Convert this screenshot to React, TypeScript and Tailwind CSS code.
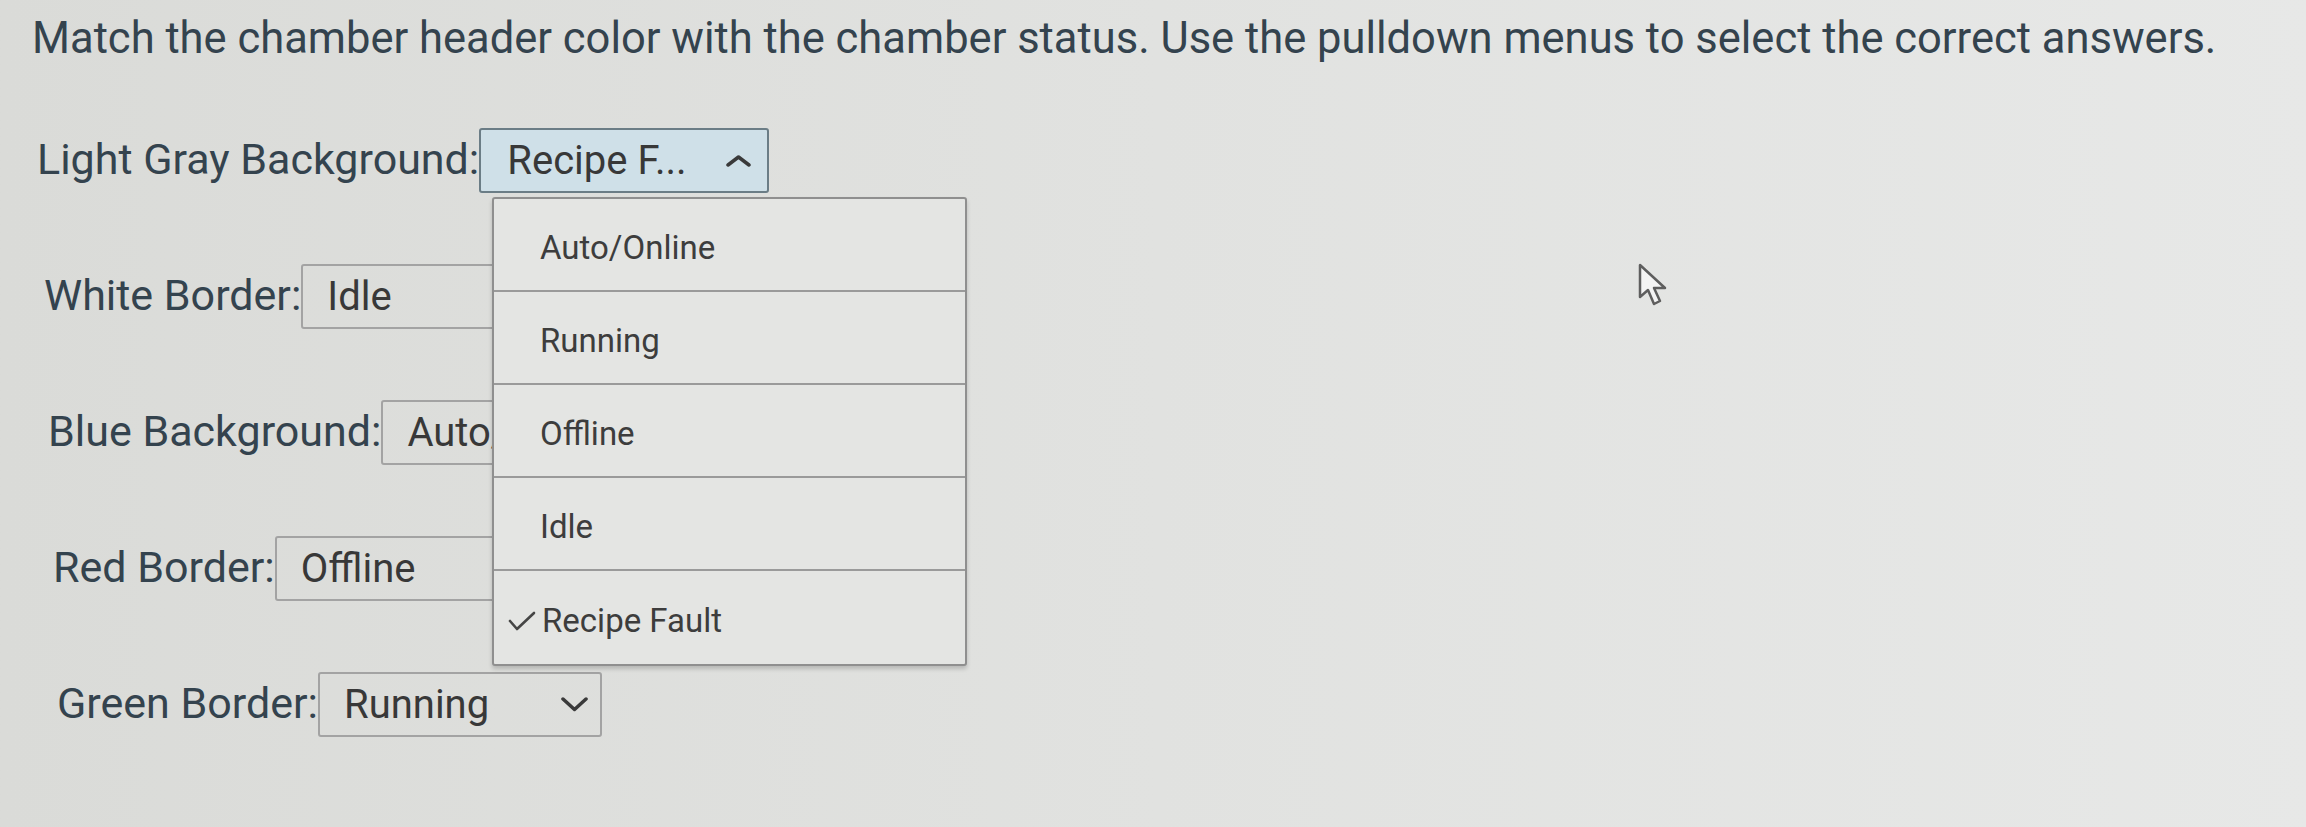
import React from "react";

const options = ["Auto/Online", "Running", "Offline", "Idle", "Recipe Fault"];

function ChevronDown() {
  return (
    <svg width="27" height="15" viewBox="0 0 27 15" fill="none">
      <polyline points="2,2 13.5,12.5 25,2" stroke="#3a3a3a" strokeWidth="3.5" strokeLinecap="round" strokeLinejoin="round" />
    </svg>
  );
}

function ChevronUp() {
  return (
    <svg width="25" height="12" viewBox="0 0 25 12" fill="none">
      <polyline points="2,10 12.5,2 23,10" stroke="#3a3a3a" strokeWidth="3.5" strokeLinecap="round" strokeLinejoin="round" />
    </svg>
  );
}

function Row({ label, value, indent, open }: { label: string; value: string; indent: string; open?: boolean }) {
  return (
    <div className={`flex items-baseline ${indent}`}>
      <span className="whitespace-nowrap text-[43px] leading-none text-[#34434e]">{label}</span>
      <div
        className={
          open
            ? "flex h-[65px] w-[290px] items-center justify-between rounded-[3px] border-2 border-[#6b7d86] bg-[#cfe0e8] pl-[26px] pr-[16px]"
            : "flex h-[65px] w-[284px] items-center justify-between overflow-hidden rounded-[3px] border-2 border-[#a3a3a3] pl-[24px] pr-[12px]"
        }
      >
        <span className="whitespace-nowrap text-[40px] leading-none text-[#383838]">{value}</span>
        {open ? <ChevronUp /> : <ChevronDown />}
      </div>
    </div>
  );
}

export default function App() {
  return (
    <div className="relative h-[827px] w-[2306px] overflow-hidden bg-linear-to-r from-[#dadbd8] via-[#e1e2e0] to-[#e7e8e7] font-['Roboto',sans-serif]">
      <h1 className="whitespace-nowrap pl-[32px] pt-[17px] text-[43.5px] font-normal leading-[44px] text-[#34434e]">
        Match the chamber header color with the chamber status. Use the pulldown menus to select the correct answers.
      </h1>

      <div className="mt-[67px] flex flex-col gap-[71px]">
        <Row label="Light Gray Background:" value="Recipe F..." indent="pl-[37px]" open />
        <Row label="White Border:" value="Idle" indent="pl-[44px]" />
        <Row label="Blue Background:" value="Auto/Online" indent="pl-[48px]" />
        <Row label="Red Border:" value="Offline" indent="pl-[53px]" />
        <Row label="Green Border:" value="Running" indent="pl-[57px]" />
      </div>

      {/* open dropdown menu */}
      <div className="absolute left-[492px] top-[197px] w-[475px] rounded-[3px] border-2 border-[#8f8f8f] bg-[#e4e5e3] shadow-[0_3px_4px_rgba(0,0,0,0.18)]">
        {options.map((o, i) => {
          const checked = o === "Recipe Fault";
          return (
            <div
              key={o}
              className={`flex h-[93px] items-center pt-[6px] text-[33px] leading-none text-[#3d3d3d] ${
                i < options.length - 1 ? "border-b-2 border-[#9a9a9a]" : ""
              } ${checked ? "pl-[14px]" : "pl-[46px]"}`}
            >
              {checked && (
                <svg width="28" height="20" viewBox="0 0 28 20" fill="none" className="mr-[6px]">
                  <polyline points="2,10 9,18 26,2" stroke="#454545" strokeWidth="2.6" strokeLinecap="round" strokeLinejoin="round" />
                </svg>
              )}
              <span>{o}</span>
            </div>
          );
        })}
      </div>

      {/* mouse pointer */}
      <svg className="absolute left-[1638px] top-[263px]" width="32" height="44" viewBox="0 0 32 44" fill="none">
        <path d="M2 2 L2 34 L10 27 L16 41 L22 38 L16 25 L27 25 Z" fill="#f4f4f4" stroke="#5e5e5e" strokeWidth="2.5" strokeLinejoin="round" />
      </svg>
    </div>
  );
}
